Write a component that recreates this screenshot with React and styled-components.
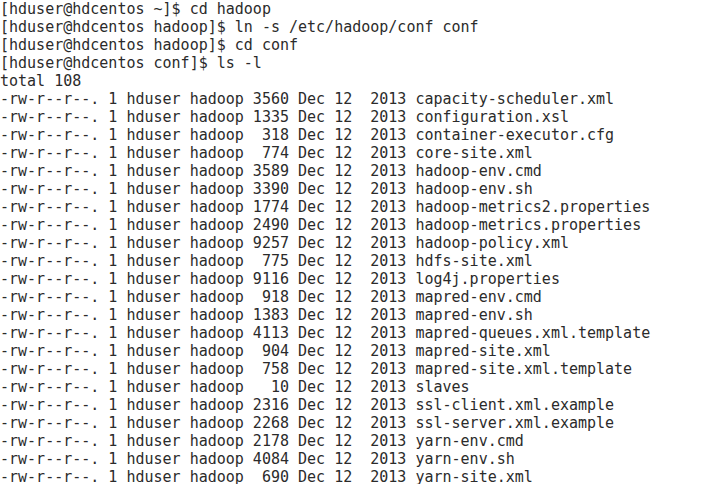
import styled, { createGlobalStyle } from 'styled-components'

const GlobalStyle = createGlobalStyle`
  html, body {
    margin: 0;
    padding: 0;
    background: #ffffff;
  }
`;

const Terminal = styled.div`
  width: 722px;
  height: 484px;
  overflow: hidden;
  background: #ffffff;
  color: #2b2b2b;
  font-family: "DejaVu Sans Mono", "Liberation Mono", monospace;
  font-size: 15px;
  line-height: 18px;
  box-sizing: border-box;
`;

const Line = styled.div`
  white-space: pre;
  height: 18px;
`;

const lines = [
  '[hduser@hdcentos ~]$ cd hadoop',
  '[hduser@hdcentos hadoop]$ ln -s /etc/hadoop/conf conf',
  '[hduser@hdcentos hadoop]$ cd conf',
  '[hduser@hdcentos conf]$ ls -l',
  'total 108',
];

const files = [
  ['3560', 'capacity-scheduler.xml'],
  ['1335', 'configuration.xsl'],
  ['318', 'container-executor.cfg'],
  ['774', 'core-site.xml'],
  ['3589', 'hadoop-env.cmd'],
  ['3390', 'hadoop-env.sh'],
  ['1774', 'hadoop-metrics2.properties'],
  ['2490', 'hadoop-metrics.properties'],
  ['9257', 'hadoop-policy.xml'],
  ['775', 'hdfs-site.xml'],
  ['9116', 'log4j.properties'],
  ['918', 'mapred-env.cmd'],
  ['1383', 'mapred-env.sh'],
  ['4113', 'mapred-queues.xml.template'],
  ['904', 'mapred-site.xml'],
  ['758', 'mapred-site.xml.template'],
  ['10', 'slaves'],
  ['2316', 'ssl-client.xml.example'],
  ['2268', 'ssl-server.xml.example'],
  ['2178', 'yarn-env.cmd'],
  ['4084', 'yarn-env.sh'],
  ['690', 'yarn-site.xml'],
];

const App = () => {
  return (
    <>
      <GlobalStyle />
      <Terminal>
        {lines.map((l, i) => <Line key={i}>{l}</Line>)}
        {files.map(([size, name]) => (
          <Line key={name}>
            {`-rw-r--r--. 1 hduser hadoop ${size.padStart(4, ' ')} Dec 12  2013 ${name}`}
          </Line>
        ))}
      </Terminal>
    </>
  )
}

export default App
